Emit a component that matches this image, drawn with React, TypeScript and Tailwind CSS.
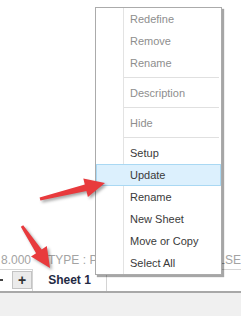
import React from "react";

type Item = { label: string; disabled?: boolean; active?: boolean } | "sep";

const items: Item[] = [
	{ label: "Redefine", disabled: true },
	{ label: "Remove", disabled: true },
	{ label: "Rename", disabled: true },
	"sep",
	{ label: "Description", disabled: true },
	"sep",
	{ label: "Hide", disabled: true },
	"sep",
	{ label: "Setup" },
	{ label: "Update", active: true },
	{ label: "Rename" },
	{ label: "New Sheet" },
	{ label: "Move or Copy" },
	{ label: "Select All" },
];

// tapered arrow polygon from tail to tip
function arrowPoints(tx: number, ty: number, px: number, py: number) {
	const dx = px - tx;
	const dy = py - ty;
	const len = Math.hypot(dx, dy);
	const ux = dx / len;
	const uy = dy / len;
	const nx = -uy;
	const ny = ux;
	const headLen = 20;
	const headW = 9.5;
	const bx = px - ux * headLen;
	const by = py - uy * headLen;
	const pts = [
		[tx + nx * 1.5, ty + ny * 1.5],
		[bx + nx * 3.4, by + ny * 3.4],
		[bx + nx * headW, by + ny * headW],
		[px, py],
		[bx - nx * headW, by - ny * headW],
		[bx - nx * 3.4, by - ny * 3.4],
		[tx - nx * 1.5, ty - ny * 1.5],
	];
	return pts.map((p) => p.map((v) => v.toFixed(1)).join(",")).join(" ");
}

function ContextMenu() {
	return (
		<div className="absolute left-[95px] top-[7px] w-[127px] border border-[#ababab] bg-white shadow-[2px_2px_1px_rgba(0,0,0,0.35)]">
			<div className="relative">
				<div className="absolute left-[27px] top-0 bottom-0 w-px bg-[#e3e3e3]" />
				{items.map((it, i) =>
					it === "sep" ? (
						<div key={i} className="h-[8px] pt-[3px]">
							<div className="ml-[28px] mr-[2px] h-px bg-[#e0e0e0]" />
						</div>
					) : (
						<div
							key={i}
							className={
								it.active
									? "relative h-[22px] border border-[#a9d8f3] bg-[#dcf0fd] pl-[33px] text-[11px] leading-[20px] text-[#3a3a3a]"
									: "relative h-[22px] pl-[34px] text-[11px] leading-[22px] " +
										(it.disabled ? "text-[#8e8e8e]" : "text-[#3a3a3a]")
							}
						>
							{it.label}
						</div>
					),
				)}
			</div>
		</div>
	);
}

export default function App() {
	return (
		<div className="relative flex h-[316px] w-[241px] flex-col overflow-hidden bg-white font-['Liberation_Sans',Arial,sans-serif]">
			<div className="h-[251px]" />
			{/* status line, mostly covered by the menu */}
			<div className="flex h-[18px] items-center whitespace-nowrap text-[12px] text-[#a3a3a3]">
				<span className="ml-[1px]">8.000</span>
				<span className="ml-[17px]">TYPE : PAPER</span>
				<span className="ml-auto">FALSE</span>
			</div>
			{/* sheet tabs */}
			<div className="flex h-[22px] items-start border-t border-[#d6d6d6]">
				<div className="mt-[9px] h-[2px] w-[3px] bg-[#444]" />
				<div className="ml-[9px] mt-[1px] flex h-[18px] w-[20px] items-center justify-center border border-[#c4c4c4] bg-[#ebebeb] text-[14px] font-bold leading-none text-[#333]">
					+
				</div>
				<div className="-mt-px flex h-[22px] w-[75px] items-center justify-center border-x border-[#d4d4d4] bg-white text-[12px] font-bold text-[#1f2a44]">
					Sheet 1
				</div>
			</div>
			<div className="h-[2px] bg-[#a8a8a8]" />
			<div className="flex-1 bg-[#f0f0f0]" />

			<ContextMenu />

			<svg
				className="pointer-events-none absolute inset-0 drop-shadow-[2px_2px_1.5px_rgba(0,0,0,0.35)]"
				width="241"
				height="316"
				viewBox="0 0 241 316"
			>
				<polygon points={arrowPoints(40, 199, 105, 183)} fill="#e83a3d" />
				<polygon points={arrowPoints(22, 226, 50, 268)} fill="#e83a3d" />
			</svg>
		</div>
	);
}
